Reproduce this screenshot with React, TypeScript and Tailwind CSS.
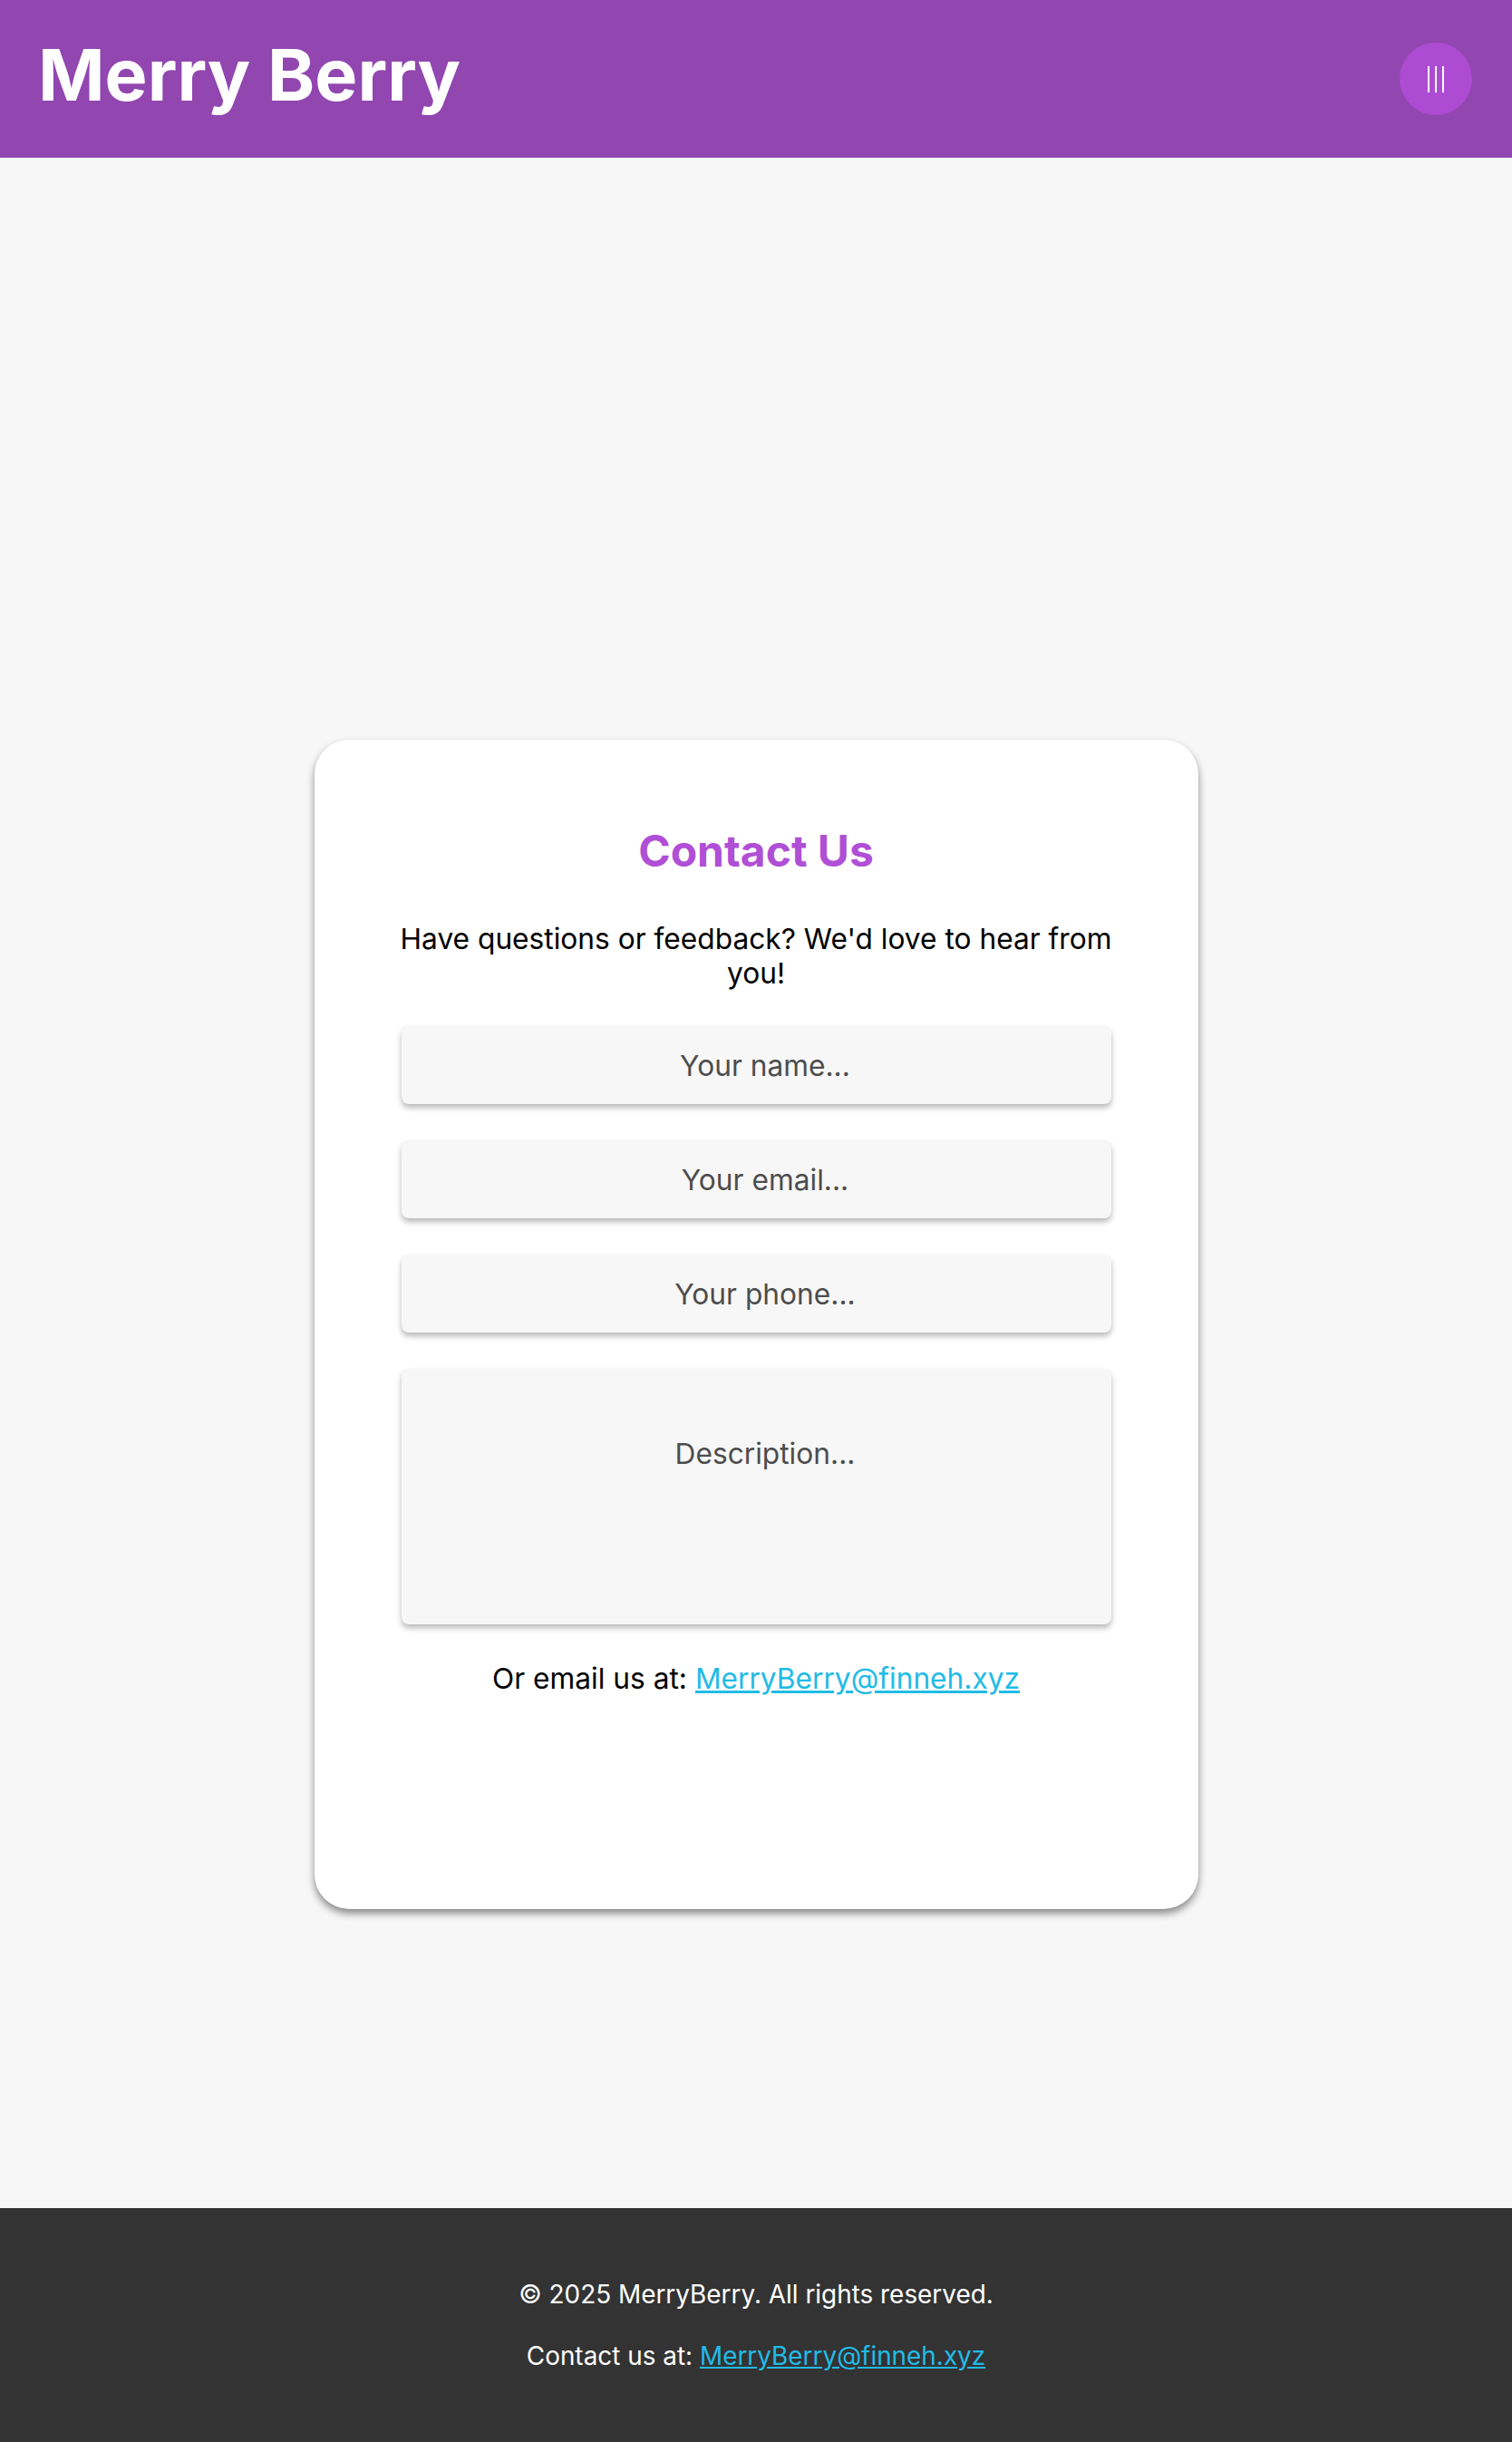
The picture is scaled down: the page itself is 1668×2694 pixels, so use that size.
import React from "react";

const fieldCls =
  "h-[86px] w-full rounded-[8px] bg-[#f7f7f7] pl-[30px] pr-[10px] text-center text-[31.7px] text-black placeholder:text-[#4d4d4d] shadow-[0_4px_6px_rgba(0,0,0,0.28)] outline-none";

export default function App() {
  return (
    <div className="min-h-screen bg-[#f7f7f7] flex flex-col font-['Inter',sans-serif]">
      <header className="h-[174px] bg-[#9146b0] flex items-center justify-between pl-[42px] pr-[44px] shrink-0">
        <h1 className="text-[79px] font-bold text-white leading-none mb-[9px]">Merry Berry</h1>
        <button className="w-[80px] h-[80px] rounded-full bg-[#ad4cd2] flex items-center justify-center gap-[6px]">
          <span className="w-[2px] h-[29px] bg-white" />
          <span className="w-[2px] h-[29px] bg-white" />
          <span className="w-[2px] h-[29px] bg-white" />
        </button>
      </header>
      <main className="flex-1 flex justify-center items-start pt-[642px] pb-[330px]">
        <div className="w-[975px] bg-white rounded-[38px] shadow-[0_5px_8px_rgba(0,0,0,0.45)] px-[96px] pt-[94px] pb-[235px] flex flex-col items-stretch">
          <h2 className="text-[48px] font-bold text-[#b04fd6] text-center leading-[58px]">Contact Us</h2>
          <p className="mt-[49px] -mx-[30px] whitespace-nowrap text-[31.7px] leading-[38px] text-black text-center">
            Have questions or feedback? We'd love to hear from
            <br />
            you!
          </p>
          <form className="mt-[39px] flex flex-col gap-[40px]" onSubmit={(e) => e.preventDefault()}>
            <input type="text" placeholder="Your name..." className={fieldCls} />
            <input type="email" placeholder="Your email..." className={fieldCls} />
            <input type="tel" placeholder="Your phone..." className={fieldCls} />
            <textarea
              placeholder="Description..."
              className="h-[282px] w-full resize-none rounded-[8px] bg-[#f7f7f7] pl-[30px] pr-[10px] pt-[70px] text-center text-[31.7px] text-black placeholder:text-[#4d4d4d] shadow-[0_4px_6px_rgba(0,0,0,0.28)] outline-none"
            />
          </form>
          <p className="mt-[41px] text-[31.7px] leading-[38px] text-black text-center">
            Or email us at:{" "}
            <a href="#" className="text-[#21bbe6] underline">MerryBerry@finneh.xyz</a>
          </p>
        </div>
      </main>
      <footer className="h-[258px] bg-[#333333] flex flex-col items-center justify-center gap-[34px] text-white text-[27.9px] leading-[34px] shrink-0">
        <p>© 2025 MerryBerry. All rights reserved.</p>
        <p>
          Contact us at:{" "}
          <a href="#" className="text-[#21bbe6] underline">MerryBerry@finneh.xyz</a>
        </p>
      </footer>
    </div>
  );
}
